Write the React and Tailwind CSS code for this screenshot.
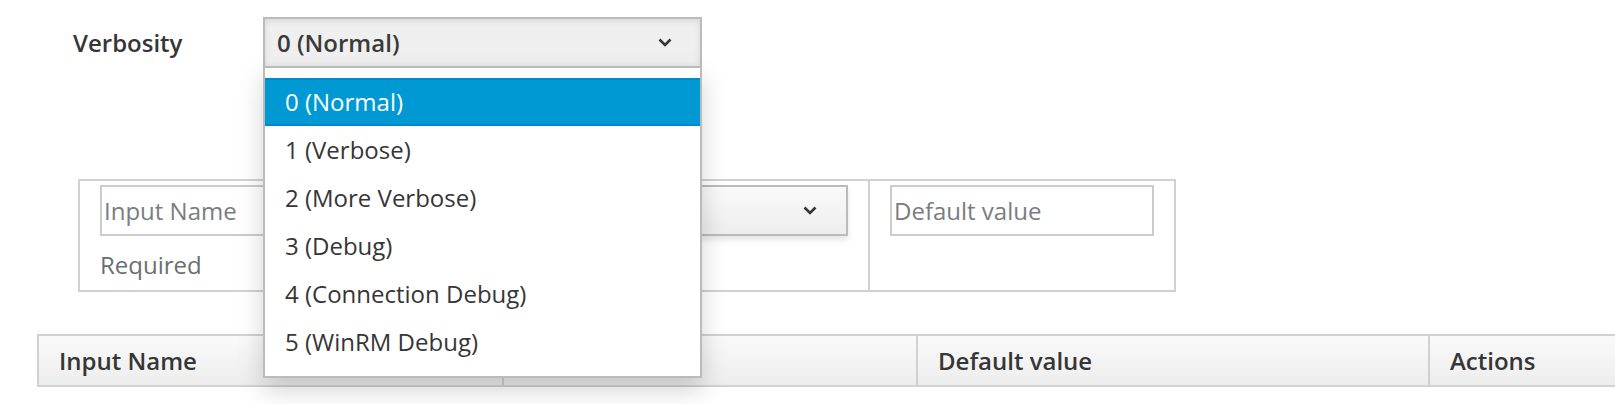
import React from 'react';

const options = [
  '0 (Normal)',
  '1 (Verbose)',
  '2 (More Verbose)',
  '3 (Debug)',
  '4 (Connection Debug)',
  '5 (WinRM Debug)',
];

const Chevron = () => (
  <svg width="14" height="9" viewBox="0 0 14 9" fill="none">
    <path d="M1.5 1.5 7 7l5.5-5.5" stroke="#363636" strokeWidth="2.6" />
  </svg>
);

const App = () => {
  const selected = 0;

  return (
    <div className="w-[1615px] h-[404px] overflow-hidden bg-white font-['Open_Sans',sans-serif] text-[24px] leading-[32px] text-[#363636]">
      <div className="flex items-center pl-[73px] pt-[17px]">
        <span className="w-[190px] font-semibold">Verbosity</span>
        <div className="relative w-[439px]">
          <button
            type="button"
            className="flex h-[51px] w-full items-center justify-between border-2 border-[#bbb] bg-[#efefef] pl-[12px] pr-[28px] font-semibold text-[#3a3a3a] shadow-[inset_0_2px_6px_rgba(3,3,3,0.1)]"
          >
            <span>{options[selected]}</span>
            <Chevron />
          </button>
          <ul className="absolute left-0 top-[49px] z-10 w-full border-2 border-[#bbb] bg-white py-[10px] shadow-[0_12px_24px_rgba(0,0,0,0.175)]">
            {options.map((opt, i) => (
              <li
                key={opt}
                className={
                  i === selected
                    ? 'flex h-[48px] items-center border-y-2 border-[#0088ce] bg-[#0099d3] px-[20px] text-white'
                    : 'flex h-[48px] items-center px-[20px] text-[#363636]'
                }
              >
                {opt}
              </li>
            ))}
          </ul>
        </div>
      </div>

      <div className="ml-[78px] mt-[111px] flex h-[113px] w-[1098px] border-2 border-[#d1d1d1]">
        <div className="w-[400px] border-r-2 border-[#d1d1d1] px-[20px] pt-[4px]">
          <input
            readOnly
            placeholder="Input Name"
            className="h-[51px] w-full border-2 border-[#ccc] px-[2px] outline-none placeholder:text-[#7a7d80]"
          />
          <div className="mt-[9px] flex h-[40px] items-center text-[#6a6e73]">Required</div>
        </div>
        <div className="w-[390px] border-r-2 border-[#d1d1d1] px-[20px] pt-[4px]">
          <button
            type="button"
            className="flex h-[51px] w-full items-center justify-between border-2 border-[#bbb] bg-linear-to-b from-[#fafafa] to-[#ededed] pl-[12px] pr-[29px] font-semibold shadow-[0_4px_6px_rgba(3,3,3,0.1)]"
          >
            <span>String</span>
            <Chevron />
          </button>
        </div>
        <div className="flex-1 px-[20px] pt-[4px]">
          <input
            readOnly
            placeholder="Default value"
            className="h-[51px] w-full border-2 border-[#ccc] px-[2px] outline-none placeholder:text-[#7a7d80]"
          />
        </div>
      </div>

      <div className="ml-[37px] mt-[42px] flex h-[53px] w-[1620px] border-2 border-[#d1d1d1] bg-linear-to-b from-[#fafafa] to-[#ededed] font-semibold">
        <div className="flex w-[465px] items-center border-r-2 border-[#d1d1d1] px-[20px]">Input Name</div>
        <div className="flex w-[414px] items-center border-r-2 border-[#d1d1d1] px-[20px]">Type</div>
        <div className="flex w-[512px] items-center border-r-2 border-[#d1d1d1] px-[20px]">Default value</div>
        <div className="flex flex-1 items-center px-[20px]">Actions</div>
      </div>
    </div>
  );
};

export default App;
